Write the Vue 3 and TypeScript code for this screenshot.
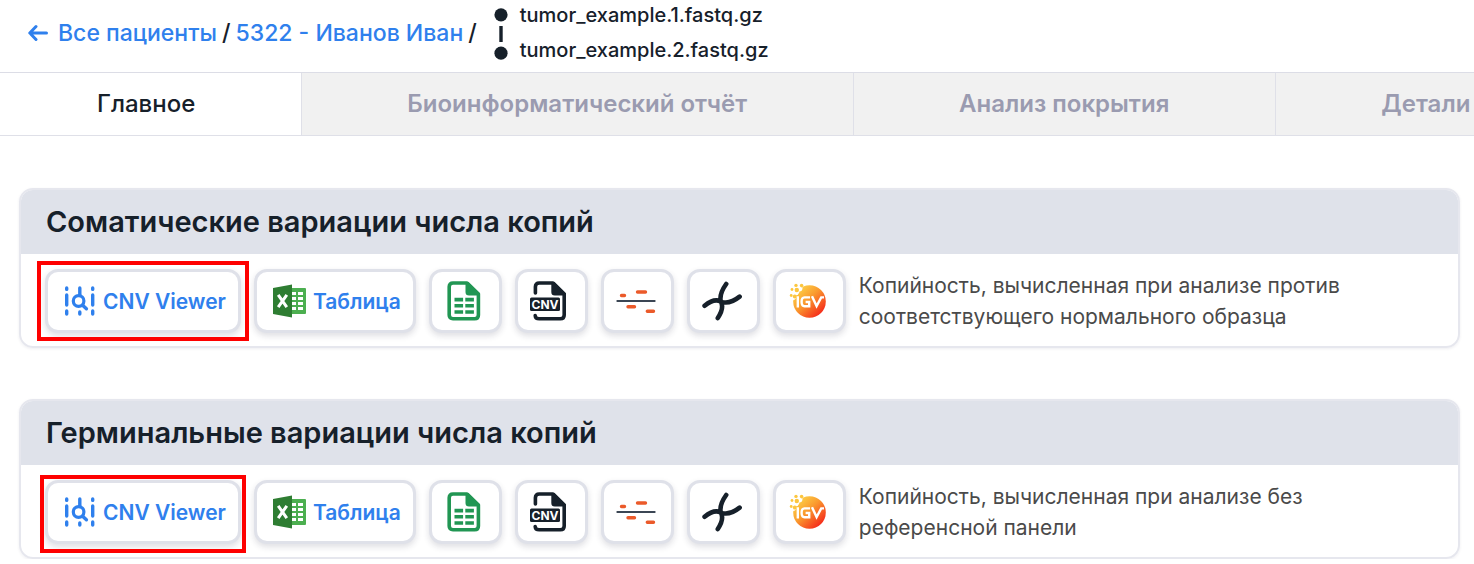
<script setup lang="ts">
type IconName = 'sheet' | 'cnv' | 'segments' | 'chromosome' | 'igv'

interface Section {
  id: string
  title: string
  note: string
}

const tabs: string[] = ['Главное', 'Биоинформатический отчёт', 'Анализ покрытия', 'Детали']

const files: string[] = ['tumor_example.1.fastq.gz', 'tumor_example.2.fastq.gz']

const sections: Section[] = [
  {
    id: 'somatic',
    title: 'Соматические вариации числа копий',
    note: 'Копийность, вычисленная при анализе против соответствующего нормального образца',
  },
  {
    id: 'germline',
    title: 'Герминальные вариации числа копий',
    note: 'Копийность, вычисленная при анализе без референсной панели',
  },
]

const tools: { name: IconName; label: string }[] = [
  { name: 'sheet', label: 'Google Таблица' },
  { name: 'cnv', label: 'Файл CNV' },
  { name: 'segments', label: 'Сегменты' },
  { name: 'chromosome', label: 'Хромосомы' },
  { name: 'igv', label: 'IGV' },
]
</script>

<template>
  <div class="page">
    <header class="top">
      <nav class="crumbs">
        <a href="#" class="back">
          <svg width="20" height="18" viewBox="0 0 20 18" aria-hidden="true">
            <path d="M8 2.5L1.8 9L8 15.5M2 9H18.5" fill="none" stroke="currentColor" stroke-width="3" stroke-linecap="round" stroke-linejoin="round" />
          </svg>
          <span>Все пациенты</span>
        </a>
        <span>/</span>
        <a href="#">5322 - Иванов Иван</a>
        <span>/</span>
      </nav>
      <div class="files">
        <svg width="14" height="52" viewBox="0 0 14 52" aria-hidden="true">
          <circle cx="7" cy="6.8" r="6.6" fill="#16202a" />
          <path d="M7 18V34" stroke="#16202a" stroke-width="3.4" />
          <circle cx="7" cy="45.2" r="6.6" fill="#16202a" />
        </svg>
        <ul>
          <li v-for="file in files" :key="file">{{ file }}</li>
        </ul>
      </div>
    </header>

    <nav class="tabs">
      <button v-for="(tab, i) in tabs" :key="tab" type="button" class="tab" :class="{ active: i === 0 }">{{ tab }}</button>
    </nav>

    <main class="content">
      <section v-for="section in sections" :key="section.id" class="card">
        <h2>{{ section.title }}</h2>
        <div class="row">
          <div class="viewer" :class="section.id">
            <button type="button" class="btn">
              <svg width="32" height="30" viewBox="0 0 32 30" aria-hidden="true">
                <g fill="none" stroke="#2f80ed" stroke-width="3.4" stroke-linecap="round">
                  <path d="M2.7 2V3.4M2.7 9V19M2.7 25V28M28.7 2V3.4M28.7 9V19M28.7 25V28M15.8 2V9M15.8 26V28" />
                  <circle cx="14.6" cy="15" r="5.3" stroke-width="3.2" />
                  <path d="M18.6 19.2L22.4 22.8" stroke-width="3.4" />
                </g>
              </svg>
              <span>CNV Viewer</span>
            </button>
          </div>
          <button type="button" class="btn">
            <svg width="33" height="34" viewBox="0 0 33 34" aria-hidden="true">
              <rect x="17" y="4" width="16" height="26" rx="1" fill="#4caf50" />
              <path d="M18 8h5v3h-5zM25 8h5v3h-5zM18 13h5v3h-5zM25 13h5v3h-5zM18 18h5v3h-5zM25 18h5v3h-5zM18 23h5v3h-5zM25 23h5v3h-5z" fill="#fff" />
              <path d="M0 4L19 0.5V33.5L0 30Z" fill="#2e7d32" />
              <path d="M5.2 10.8L13.8 23.2M13.8 10.8L5.2 23.2" stroke="#fff" stroke-width="3" />
            </svg>
            <span>Таблица</span>
          </button>
          <button v-for="tool in tools" :key="tool.name" type="button" class="btn square" :aria-label="tool.label">
            <svg v-if="tool.name === 'sheet'" width="34" height="40" viewBox="0 0 34 40" aria-hidden="true">
              <path d="M6 2H20L31.4 13V34Q31.4 37.8 27.6 37.8H6Q2.2 37.8 2.2 34V5.8Q2.2 2 6 2Z" fill="none" stroke="#219653" stroke-width="3.6" stroke-linejoin="round" />
              <path d="M18.5 1H21.5L33 12.5V14.5H22Q18.5 14.5 18.5 11Z" fill="#219653" />
              <path d="M7.5 16.8h8.6v3.6H7.5zM18.3 16.8h8.6v3.6h-8.6zM7.5 23h8.6v3.6H7.5zM18.3 23h8.6v3.6h-8.6zM7.5 29.2h8.6v3.6H7.5zM18.3 29.2h8.6v3.6h-8.6z" fill="#219653" />
            </svg>
            <svg v-else-if="tool.name === 'cnv'" width="39" height="40" viewBox="1 0 39 40" aria-hidden="true">
              <path d="M6.4 12V5.8Q6.4 2 10.2 2H24L35.2 13V34Q35.2 37.8 31.4 37.8H10.2Q6.4 37.8 6.2 34.6" fill="none" stroke="#16202a" stroke-width="3.6" stroke-linecap="round" stroke-linejoin="round" />
              <path d="M22.3 1H25.5L37 12.5V14.5H25.8Q22.3 14.5 22.3 11Z" fill="#16202a" />
              <rect x="1" y="16.5" width="30" height="13.5" rx="1.5" fill="#16202a" />
              <text x="16" y="27.6" text-anchor="middle" class="cnv-text">CNV</text>
            </svg>
            <svg v-else-if="tool.name === 'segments'" width="40" height="24" viewBox="0 0 40 24" aria-hidden="true">
              <path d="M1.4 12H38.6" stroke="#3b4654" stroke-width="2.2" stroke-linecap="round" />
              <path d="M5.5 6.5H8.5M21.5 3H29.5M12 17.7H18.5M31.3 22.3H37.5" stroke="#eb5a2a" stroke-width="3.4" stroke-linecap="round" />
            </svg>
            <svg v-else-if="tool.name === 'chromosome'" width="40" height="40" viewBox="0 0 40 40" aria-hidden="true">
              <path d="M24.2 3Q17 13 18.8 20.5Q22.5 27 15.8 37M2.6 24.8Q12 17 18.8 20.5Q27 24 37.6 15.6" fill="none" stroke="#16202a" stroke-width="4.6" stroke-linecap="round" stroke-linejoin="round" />
            </svg>
            <svg v-else width="38" height="36" viewBox="0 0 38 36" aria-hidden="true">
              <defs>
                <linearGradient :id="`igv-${section.id}`" x1="0.1" y1="0.1" x2="0.85" y2="0.9">
                  <stop offset="0" stop-color="#fdd649" />
                  <stop offset="0.45" stop-color="#fa9a2e" />
                  <stop offset="1" stop-color="#f5281a" />
                </linearGradient>
              </defs>
              <circle cx="20.5" cy="18.5" r="16.3" :fill="`url(#igv-${section.id})`" />
              <g fill="#fff">
                <circle cx="6" cy="8" r="4.5" />
                <circle cx="10" cy="5" r="3.5" />
                <circle cx="4" cy="14" r="3" />
              </g>
              <g fill="#fcc63f">
                <circle cx="7" cy="2.4" r="1.7" />
                <circle cx="12.6" cy="2.6" r="1.8" />
                <circle cx="3" cy="6.5" r="1.4" />
                <circle cx="7.8" cy="7" r="2.2" />
                <circle cx="2.2" cy="12.5" r="1.4" />
                <circle cx="5.8" cy="13.6" r="2" />
              </g>
              <path d="M8.8 13.2V24.4M21 14.4H15.5Q12.6 14.4 12.6 18.8Q12.6 23.2 15.5 23.2H20.2V19H16.6M23 13.2L27.6 23L32.2 14.4H35" fill="none" stroke="#fff" stroke-width="2.4" />
            </svg>
          </button>
          <p>{{ section.note }}</p>
        </div>
      </section>
    </main>
  </div>
</template>

<style>
body {
  margin: 0;
  background: #fff;
  overflow: hidden;
}
</style>

<style scoped>
.page {
  font-family: Inter, "Liberation Sans", sans-serif;
  font-weight: 500;
  color: #16202a;
}

.top {
  display: flex;
  gap: 17px;
  height: 72px;
  padding-left: 28px;
  border-bottom: 1px solid #dcdde6;
}

.crumbs {
  display: flex;
  align-items: center;
  gap: 5px;
  padding-bottom: 6px;
  font-size: 23px;
  white-space: nowrap;
}

a {
  color: #2f80ed;
  text-decoration: none;
}

.back {
  display: flex;
  align-items: center;
  gap: 10px;
}

.files {
  display: flex;
  align-items: flex-start;
  gap: 12px;
  padding-top: 8px;
}

ul {
  margin: -10px 0 0;
  padding: 0;
  list-style: none;
  font-size: 20px;
  line-height: 35px;
}

.tabs {
  display: flex;
  overflow: hidden;
  border-bottom: 1px solid #dfe0e8;
}

.tab {
  flex: none;
  height: 62px;
  padding: 0 106px 2px 105px;
  border: 0;
  border-left: 1px solid #dfe0e8;
  background: #f1f1f1;
  color: #9a9bb0;
  font: 600 24px Inter, "Liberation Sans", sans-serif;
}

.tab.active {
  padding-left: 97px;
  border-left: 0;
  background: #fff;
  color: #16202a;
  font-weight: 500;
}

.content {
  display: flex;
  flex-direction: column;
  gap: 51px;
  padding: 52px 14px 0 19px;
}

.card {
  border: 2px solid #e6e7ee;
  border-radius: 14px;
  box-shadow: 0 1px 3px rgba(40, 40, 80, 0.08);
}

h2 {
  margin: 0;
  padding: 0 25px;
  border-radius: 12px 12px 0 0;
  background: #dfe2ea;
  font-size: 29px;
  font-weight: 600;
  line-height: 64px;
}

.row {
  display: flex;
  align-items: center;
  gap: 13px;
  padding: 15px 24px 13px;
}

.viewer {
  position: relative;
}

.viewer::after {
  content: "";
  position: absolute;
  inset: -8px;
  border: 4px solid #fe0000;
  pointer-events: none;
}

.viewer.germline::after {
  inset: -5px -5px -9px;
}

.btn {
  display: flex;
  align-items: center;
  justify-content: center;
  flex: none;
  gap: 7px;
  height: 64px;
  padding: 0 12px 0 16px;
  border: 3px solid #dfe1e9;
  border-radius: 13px;
  background: #fff;
  box-shadow: 0 3px 6px rgba(30, 30, 60, 0.14);
  color: #2f80ed;
  font: 600 21px Inter, "Liberation Sans", sans-serif;
  box-sizing: border-box;
}

.square {
  width: 73px;
  padding: 0 3px 0 0;
}

.cnv-text {
  fill: #fff;
  font: 700 12px Inter, sans-serif;
}

p {
  max-width: 520px;
  margin: 0;
  color: #4a4a4a;
  font-size: 21px;
  font-weight: 400;
  line-height: 31px;
}
</style>
